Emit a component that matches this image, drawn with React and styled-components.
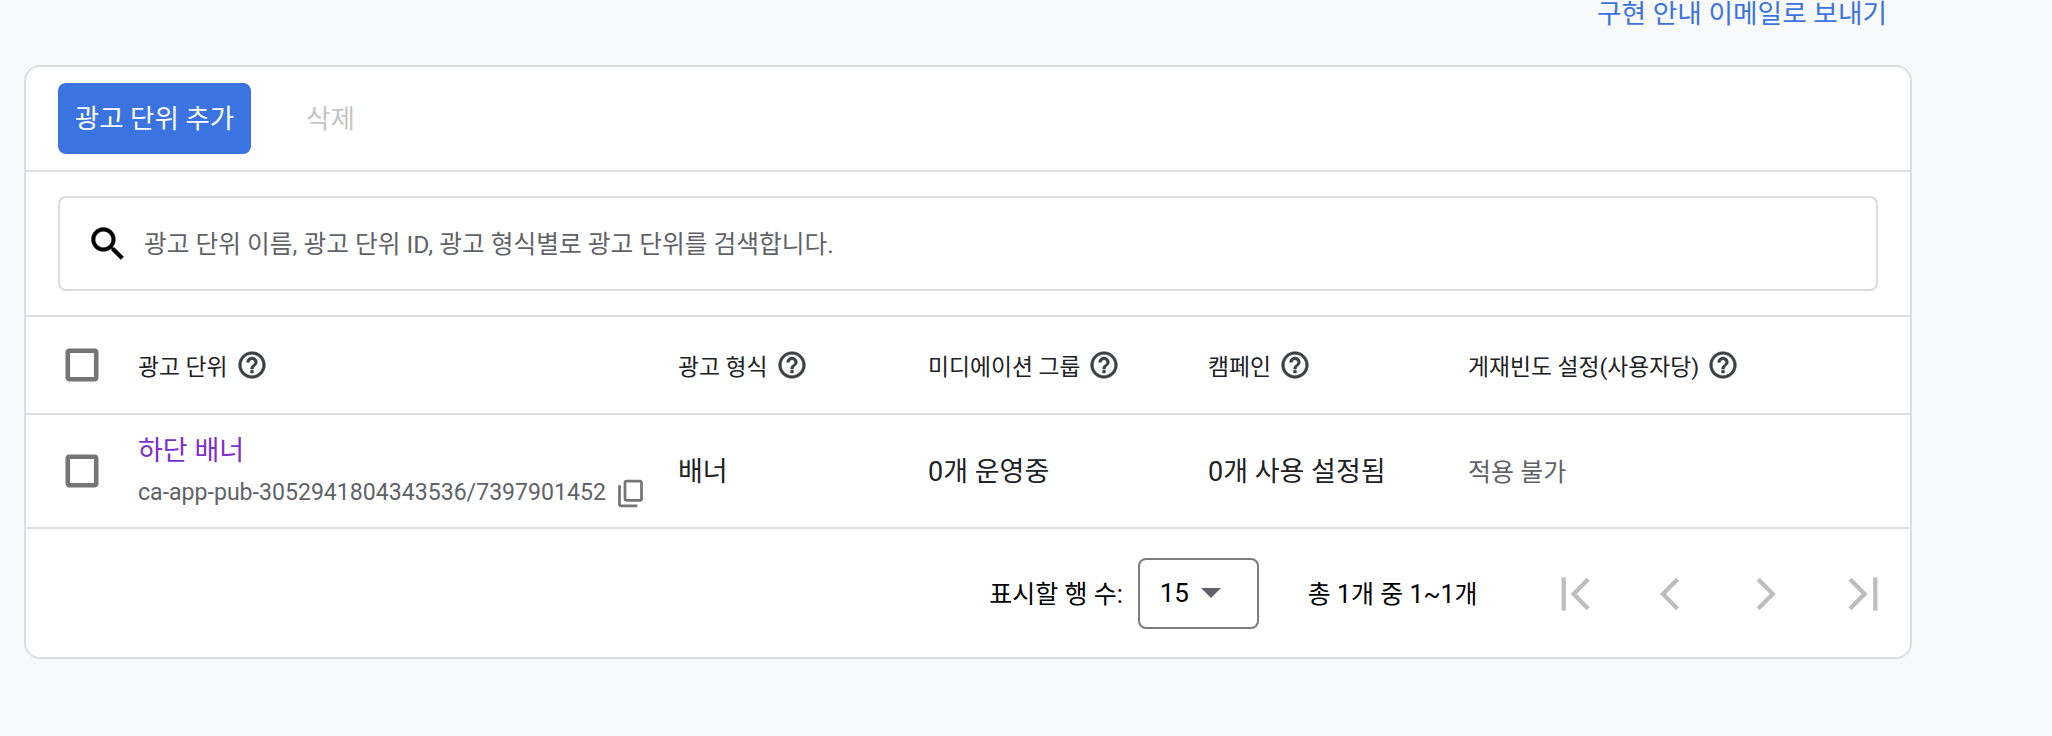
import React from 'react';
import styled, { createGlobalStyle } from 'styled-components';

const GlobalStyle = createGlobalStyle`
  html, body {
    margin: 0;
    background: #f8f9fa;
    font-family: Roboto, "Noto Sans CJK KR", sans-serif;
  }
`;

const paths = {
  help: 'M11 18h2v-2h-2v2zm1-16C6.48 2 2 6.48 2 12s4.48 10 10 10 10-4.48 10-10S17.52 2 12 2zm0 18c-4.41 0-8-3.59-8-8s3.59-8 8-8 8 3.59 8 8-3.59 8-8 8zm0-14c-2.21 0-4 1.79-4 4h2c0-1.1.9-2 2-2s2 .9 2 2c0 2-3 1.75-3 5h2c0-2.25 3-2.5 3-5 0-2.21-1.79-4-4-4z',
  search: 'M15.5 14h-.79l-.28-.27C15.41 12.59 16 11.11 16 9.5 16 5.91 13.09 3 9.5 3S3 5.91 3 9.5 5.91 16 9.5 16c1.61 0 3.09-.59 4.23-1.57l.27.28v.79l5 4.99L20.49 19l-4.99-5zm-6 0C7.01 14 5 11.99 5 9.5S7.01 5 9.5 5 14 7.01 14 9.5 11.99 14 9.5 14z',
  copy: 'M9 2h10c1.1 0 2 .9 2 2v12c0 1.1-.9 2-2 2H9c-1.1 0-2-.9-2-2V4c0-1.1.9-2 2-2zm0 2v12h10V4H9zM3 6h2v14h12v2H5c-1.1 0-2-.9-2-2V6z',
  check: 'M18.5 5.5v13h-13v-13h13m.5-2.5H5c-1.1 0-2 .9-2 2v14c0 1.1.9 2 2 2h14c1.1 0 2-.9 2-2V5c0-1.1-.9-2-2-2z',
};

const pagerPaths = {
  first: 'M6.8 6V18M15.7 6.6L10.4 12L15.7 17.4',
  prev: 'M14 6.6L8.7 12L14 17.4',
  next: 'M8.8 6.6L14.1 12L8.8 17.4',
  last: 'M8 6.6L13.3 12L8 17.4M17.2 6V18',
};

const Icon = ({ name, size, color, bold }) => (
  <svg
    width={size}
    height={size}
    viewBox="0 0 24 24"
    fill={color}
    stroke={bold ? color : 'none'}
    strokeWidth={bold || 0}
    style={{ flex: 'none', display: 'block' }}
  >
    <path d={paths[name]} />
  </svg>
);

const PagerIcon = ({ name }) => (
  <svg width={66} height={66} viewBox="0 0 24 24" fill="none" stroke="#bdbdbd" strokeWidth={1.55} style={{ flex: 'none', display: 'block' }}>
    <path d={pagerPaths[name]} />
  </svg>
);

const Page = styled.div`
  width: 2052px;
  height: 736px;
  overflow: hidden;
  box-sizing: border-box;
  padding: 0 140px 0 24px;
`;

const TopBar = styled.div`
  height: 65px;
  display: flex;
  justify-content: flex-end;
  padding-right: 25px;
`;

const EmailLink = styled.a`
  color: #3b73e0;
  font-size: 26.7px;
  line-height: 28px;
  white-space: nowrap;
`;

const Card = styled.div`
  box-sizing: border-box;
  height: 594px;
  background: #fff;
  border: 2px solid #dcdde1;
  border-radius: 16px;
`;

const Toolbar = styled.div`
  height: 105px;
  box-sizing: border-box;
  padding: 16px 32px 0;
  display: flex;
  gap: 55px;
  align-items: flex-start;
  border-bottom: 2px solid #dfe0e3;
`;

const AddButton = styled.button`
  width: 193px;
  height: 71px;
  padding: 0 0 4px;
  border: 0;
  border-radius: 8px;
  background: #3b73e0;
  color: #fff;
  font: inherit;
  font-size: 26.5px;
`;

const DeleteButton = styled.span`
  color: #c4c4c4;
  font-size: 26.6px;
  line-height: 71px;
`;

const SearchSection = styled.div`
  box-sizing: border-box;
  height: 145px;
  padding: 24px 32px 0;
  border-bottom: 2px solid #dfe0e3;
`;

const SearchBox = styled.div`
  box-sizing: border-box;
  height: 95px;
  border: 2px solid #dcdde1;
  border-radius: 8px;
  display: flex;
  align-items: center;
  gap: 14px;
  padding-left: 26px;
  color: #5f6368;
  font-size: 24.7px;
`;

const SearchHint = styled.span`
  padding-bottom: 3px;
`;

const Row = styled.div`
  box-sizing: border-box;
  height: ${(p) => p.$height}px;
  display: grid;
  grid-template-columns: 112px 540px 250px 280px 260px 1fr;
  align-items: center;
  border-bottom: 2px solid #dfe0e3;
`;

const CheckCell = styled.div`
  padding-left: 34px;
`;

const HeaderCell = styled.div`
  display: flex;
  align-items: center;
  gap: 8px;
  color: #202124;
  font-size: 22.8px;
  white-space: nowrap;
`;

const NameCell = styled.div`
  display: flex;
  flex-direction: column;
  gap: 8px;
`;

const NameLink = styled.a`
  color: #7b2fd0;
  font-size: 27px;
  line-height: 36px;
`;

const UnitId = styled.div`
  display: flex;
  align-items: center;
  gap: 8px;
  color: #5f6368;
  font-size: 23.1px;
  line-height: 32px;
`;

const BodyCell = styled.div`
  padding-bottom: 3px;
  color: ${(p) => (p.$muted ? '#5f6368' : '#202124')};
  font-size: ${(p) => (p.$muted ? 25 : 27)}px;
`;

const Footer = styled.div`
  height: 129px;
  box-sizing: border-box;
  padding-right: 16px;
  display: flex;
  align-items: center;
  justify-content: flex-end;
  color: #000;
  font-size: 25px;
`;

const RowsLabel = styled.span`
  margin-right: 15px;
  padding-bottom: 3px;
`;

const PageSelect = styled.div`
  box-sizing: border-box;
  width: 121px;
  height: 71px;
  border: 2px solid #7b7d81;
  border-radius: 8px;
  display: flex;
  align-items: center;
  gap: 12px;
  padding: 0 0 2px 20px;
  font-size: 26px;
`;

const Caret = styled.span`
  width: 0;
  height: 0;
  border-left: 10px solid transparent;
  border-right: 10px solid transparent;
  border-top: 10px solid #5f6368;
`;

const RangeText = styled.span`
  margin-left: 49px;
  margin-right: 67px;
  padding-bottom: 3px;
`;

const Pager = styled.div`
  display: flex;
  gap: 28.5px;
`;

const headers = ['광고 단위', '광고 형식', '미디에이션 그룹', '캠페인', '게재빈도 설정(사용자당)'];

export default function App() {
  return (
    <Page>
      <GlobalStyle />
      <TopBar>
        <EmailLink>구현 안내 이메일로 보내기</EmailLink>
      </TopBar>
      <Card>
        <Toolbar>
          <AddButton>광고 단위 추가</AddButton>
          <DeleteButton>삭제</DeleteButton>
        </Toolbar>
        <SearchSection>
          <SearchBox>
            <Icon name="search" size={44} color="#000" bold={0.25} />
            <SearchHint>광고 단위 이름, 광고 단위 ID, 광고 형식별로 광고 단위를 검색합니다.</SearchHint>
          </SearchBox>
        </SearchSection>
        <Row $height={98}>
          <CheckCell>
            <Icon name="check" size={44} color="#757575" />
          </CheckCell>
          {headers.map((label) => (
            <HeaderCell key={label}>
              {label}
              <Icon name="help" size={32} color="#3c4043" bold={0.4} />
            </HeaderCell>
          ))}
        </Row>
        <Row $height={114}>
          <CheckCell>
            <Icon name="check" size={44} color="#757575" />
          </CheckCell>
          <NameCell>
            <NameLink>하단 배너</NameLink>
            <UnitId>
              ca-app-pub-3052941804343536/7397901452
              <Icon name="copy" size={33} color="#757575" />
            </UnitId>
          </NameCell>
          <BodyCell>배너</BodyCell>
          <BodyCell>0개 운영중</BodyCell>
          <BodyCell>0개 사용 설정됨</BodyCell>
          <BodyCell $muted>적용 불가</BodyCell>
        </Row>
        <Footer>
          <RowsLabel>표시할 행 수:</RowsLabel>
          <PageSelect>
            15
            <Caret />
          </PageSelect>
          <RangeText>총 1개 중 1~1개</RangeText>
          <Pager>
            <PagerIcon name="first" />
            <PagerIcon name="prev" />
            <PagerIcon name="next" />
            <PagerIcon name="last" />
          </Pager>
        </Footer>
      </Card>
    </Page>
  );
}
